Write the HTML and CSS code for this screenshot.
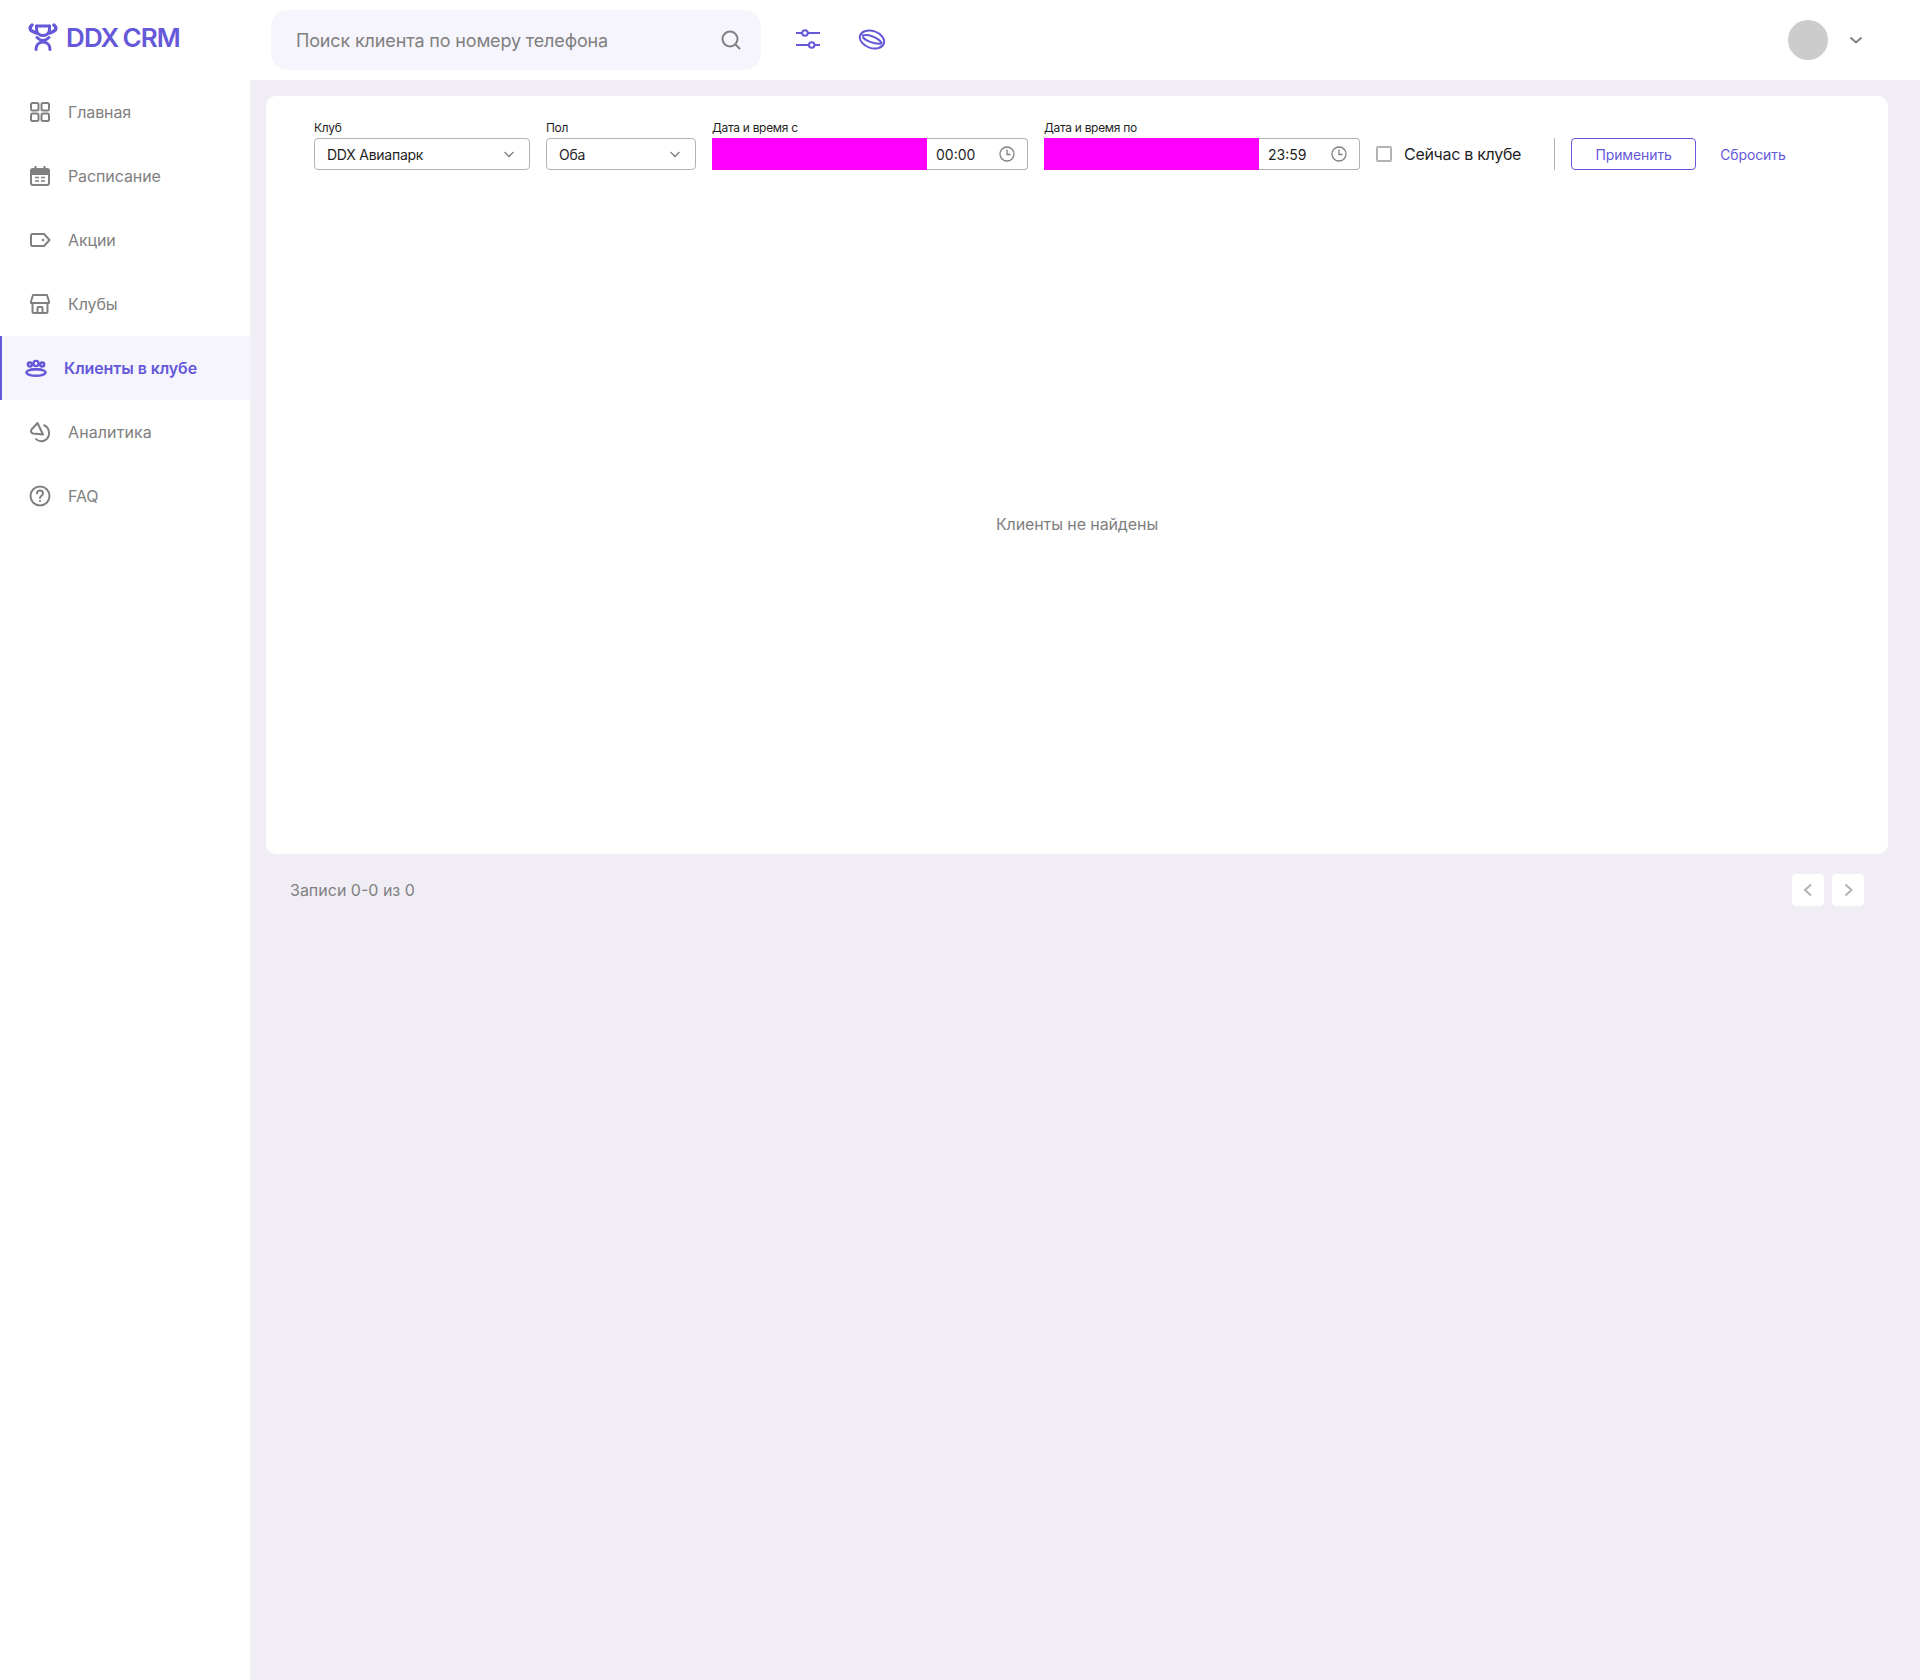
FILE: index.html
```html
<!DOCTYPE html>
<html lang="ru">

<head>
    <meta charset="UTF-8">
    <title>Клиенты в клубе</title>
    <link rel="stylesheet" href="styles.css">
</head>

<body>
    <aside class="sidebar">
        <div class="logo">
            <svg class="logo_icon" width="30" height="28" viewBox="0 0 30 28" fill="none" stroke="#6558d9" stroke-width="3" stroke-linecap="round">
                <path d="M8.500 3v3c0 4 2.500 6.500 6.500 6.500s6.500-2.500 6.500-6.500V3" />
                <path d="M8.500 3h13" />
                <path d="M4 2c-2.500 2-2.500 4.500 0 6l4 2" stroke-width="3.500" />
                <path d="M26 2c2.500 2 2.500 4.500 0 6l-4 2" stroke-width="3.500" />
                <path d="M9 14.500c2 2 4 3 6 3s4-1 6-3" />
                <path d="M8 26.500c0-4.500 3-7.500 7-7.500s7 3 7 7.500" />
            </svg>
            <span class="logo_text">DDX<span class="logo_gap">CRM</span></span>
        </div>
        <nav class="menu">
            <a class="menu_item">
                <svg width="24" height="24" viewBox="0 0 24 24" fill="none" stroke="currentColor" stroke-width="2">
                    <rect x="3" y="3" width="7.500" height="7.500" rx="1.500" />
                    <rect x="13.500" y="3" width="7.500" height="7.500" rx="1.500" />
                    <rect x="3" y="13.500" width="7.500" height="7.500" rx="1.500" />
                    <rect x="13.500" y="13.500" width="7.500" height="7.500" rx="1.500" />
                </svg>
                <span>Главная</span>
            </a>
            <a class="menu_item">
                <svg width="24" height="24" viewBox="0 0 24 24" fill="none" stroke="currentColor" stroke-width="2">
                    <rect x="3" y="5" width="18" height="16" rx="2" />
                    <path d="M3 7h18v3H3z" fill="currentColor" />
                    <path d="M7.500 2v4M16.500 2v4" />
                    <path d="M7 13.500h4M13 13.500h4M7 17h4M13 17h4" stroke-width="1.600" />
                </svg>
                <span>Расписание</span>
            </a>
            <a class="menu_item">
                <svg width="24" height="24" viewBox="0 0 24 24" fill="none" stroke="currentColor" stroke-width="2" stroke-linejoin="round">
                    <path d="M3 7.500a1.500 1.500 0 0 1 1.500-1.500H16l5.500 6-5.500 6H4.500A1.500 1.500 0 0 1 3 16.500z" />
                    <circle cx="15" cy="12" r="1.300" fill="currentColor" stroke="none" />
                </svg>
                <span>Акции</span>
            </a>
            <a class="menu_item">
                <svg width="24" height="24" viewBox="0 0 24 24" fill="none" stroke="currentColor" stroke-width="2" stroke-linejoin="round">
                    <path d="M5 3h14l2 6.500v1.500H3V9.500z" />
                    <path d="M4.500 11v8.500A1.500 1.500 0 0 0 6 21h12a1.500 1.500 0 0 0 1.500-1.500V11" />
                    <path d="M9.500 21v-5a1 1 0 0 1 1-1h3a1 1 0 0 1 1 1v5" />
                </svg>
                <span>Клубы</span>
            </a>
            <a class="menu_item active">
                <svg width="24" height="24" viewBox="0 0 24 24" fill="none" stroke="currentColor" stroke-width="2.400">
                    <circle cx="12" cy="7.500" r="2.600" />
                    <circle cx="5.800" cy="8.500" r="2" />
                    <circle cx="18.200" cy="8.500" r="2" />
                    <ellipse cx="12" cy="16.500" rx="9.500" ry="3.200" />
                    <path d="M6 14c2-1.200 10-1.200 12 0" />
                </svg>
                <span>Клиенты в клубе</span>
            </a>
            <a class="menu_item">
                <svg width="24" height="24" viewBox="0 0 24 24" fill="none" stroke="currentColor" stroke-width="2" stroke-linejoin="round">
                    <path d="M9.500 3 3.500 9.500C2.500 11 3 13 5 13.500l10 1z" />
                    <path d="M15.500 5a8.500 8.500 0 0 1 1 15.500c-3.500 1.500-7 .500-9-2" />
                </svg>
                <span class="analytics_text">Аналитика</span>
            </a>
            <a class="menu_item">
                <svg width="24" height="24" viewBox="0 0 24 24" fill="none" stroke="currentColor" stroke-width="2" stroke-linecap="round">
                    <circle cx="12" cy="12" r="9.500" />
                    <path d="M9 9.500c0-1.800 1.300-3 3-3s3 1.200 3 2.800c0 2.400-3 2.400-3 4.700" />
                    <circle cx="12" cy="17" r="1.100" fill="currentColor" stroke="none" />
                </svg>
                <span>FAQ</span>
            </a>
        </nav>
    </aside>

    <div class="main">
        <header class="topbar">
            <div class="search">
                <span class="search_text">Поиск клиента по номеру телефона</span>
                <svg width="24" height="24" viewBox="0 0 24 24" fill="none" stroke="#808080" stroke-width="2" stroke-linecap="round">
                    <circle cx="11" cy="11" r="7.500" />
                    <path d="M17 17l3.500 3.500" />
                </svg>
            </div>
            <div class="top_icons">
                <svg width="28" height="28" viewBox="0 0 28 28" fill="none" stroke="#6558d9" stroke-width="2">
                    <path d="M2 7h24M2 19h24" />
                    <circle cx="11" cy="7" r="2.800" fill="#fff" />
                    <circle cx="17.700" cy="19" r="2.800" fill="#fff" />
                </svg>
                <svg width="28" height="28" viewBox="0 0 28 28" fill="none" stroke="#6558d9" stroke-width="2">
                    <ellipse cx="14" cy="13.500" rx="12.500" ry="8.500" transform="rotate(18 14 13.500)" />
                    <path d="M4 9.500c6-1.500 16 1.500 20 8" />
                    <path d="M4.500 10.500c2 4 12 8 19 7" />
                </svg>
            </div>
            <div class="user">
                <div class="avatar"></div>
                <svg width="16" height="16" viewBox="0 0 16 16" fill="none" stroke="#808080" stroke-width="2">
                    <path d="M2.500 5.500 8 10.500l5.500-5" />
                </svg>
            </div>
        </header>

        <div class="content">
            <section class="card">
                <div class="filters">
                    <div class="field">
                        <label>Клуб</label>
                        <div class="select club_select">
                            <span>DDX Авиапарк</span>
                            <svg width="12" height="12" viewBox="0 0 12 12" fill="none" stroke="#808080" stroke-width="1.300"><path d="M1.500 4 6 8.500 10.500 4" /></svg>
                        </div>
                    </div>
                    <div class="field">
                        <label>Пол</label>
                        <div class="select sex_select">
                            <span>Оба</span>
                            <svg width="12" height="12" viewBox="0 0 12 12" fill="none" stroke="#808080" stroke-width="1.300"><path d="M1.500 4 6 8.500 10.500 4" /></svg>
                        </div>
                    </div>
                    <div class="field">
                        <label>Дата и время с</label>
                        <div class="datetime">
                            <div class="date_box"></div>
                            <div class="time_box">
                                <span>00:00</span>
                                <svg width="16" height="16" viewBox="0 0 16 16" fill="none" stroke="#808080" stroke-width="1.300"><circle cx="8" cy="8" r="7" /><path d="M8 3.500V8.500h3.500" /></svg>
                            </div>
                        </div>
                    </div>
                    <div class="field">
                        <label>Дата и время по</label>
                        <div class="datetime">
                            <div class="date_box"></div>
                            <div class="time_box">
                                <span>23:59</span>
                                <svg width="16" height="16" viewBox="0 0 16 16" fill="none" stroke="#808080" stroke-width="1.300"><circle cx="8" cy="8" r="7" /><path d="M8 3.500V8.500h3.500" /></svg>
                            </div>
                        </div>
                    </div>
                    <div class="now_in_club">
                        <span class="checkbox"></span>
                        <span>Сейчас в клубе</span>
                    </div>
                    <div class="divider"></div>
                    <button class="apply_btn">Применить</button>
                    <a class="reset_link">Сбросить</a>
                </div>
                <div class="empty">Клиенты не найдены</div>
            </section>
            <div class="pagination">
                <span class="records">Записи 0-0 из 0</span>
                <div class="pages">
                    <div class="page_btn">
                        <svg width="12" height="16" viewBox="0 0 12 16" fill="none" stroke="#b3b3b3" stroke-width="2"><path d="M9 2.500 3 8l6 5.500" /></svg>
                    </div>
                    <div class="page_btn">
                        <svg width="12" height="16" viewBox="0 0 12 16" fill="none" stroke="#b3b3b3" stroke-width="2"><path d="M3.500 2.500 9.500 8l-6 5.500" /></svg>
                    </div>
                </div>
            </div>
        </div>
    </div>
</body>

</html>
```

FILE: styles.css
```css
* {
    box-sizing: border-box;
}

body {
    display: flex;
    margin: 0;
    min-height: 100vh;
    background-color: #f0edf5;
    font-family: "Inter", "Noto Sans", sans-serif;
    color: #1f1f1f;
}

.sidebar {
    width: 250px;
    flex-shrink: 0;
    background-color: #fff;
}

.logo {
    display: flex;
    align-items: center;
    height: 80px;
    padding: 0 0 6px 28px;
    gap: 8px;
}

.logo_text {
    font-size: 26px;
    font-weight: 600;
    letter-spacing: -0.9px;
    color: #6558d9;
}

.logo_gap {
    margin-left: 4px;
}

.menu_item {
    display: flex;
    align-items: center;
    height: 64px;
    padding-left: 28px;
    gap: 16px;
    font-size: 16px;
    letter-spacing: -0.1px;
    color: #808080;
}

.analytics_text {
    letter-spacing: 0.1px;
}

.menu_item.active {
    padding-left: 22px;
    border-left: 2px solid #6558d9;
    background-color: #f6f5fd;
    color: #6558d9;
    font-weight: 600;
}

.main {
    display: flex;
    flex-direction: column;
    flex-grow: 1;
    min-width: 0;
}

.topbar {
    display: flex;
    align-items: center;
    height: 80px;
    flex-shrink: 0;
    padding: 0 56px 0 21px;
    background-color: #fff;
}

.search {
    display: flex;
    align-items: center;
    justify-content: space-between;
    width: 490px;
    height: 60px;
    padding: 0 18px 0 25px;
    border-radius: 16px;
    background-color: #f6f5fd;
}

.search_text {
    font-size: 18px;
    letter-spacing: -0.15px;
    color: #808080;
}

.top_icons {
    display: flex;
    margin-left: 33px;
    gap: 36px;
}

.user {
    display: flex;
    align-items: center;
    margin-left: auto;
    gap: 20px;
}

.avatar {
    width: 40px;
    height: 40px;
    border-radius: 50%;
    background-color: #cccccc;
}

.content {
    padding: 16px 32px 0 16px;
}

.card {
    display: flex;
    flex-direction: column;
    height: 758px;
    padding: 24px 48px 0 48px;
    border-radius: 10px;
    background-color: #fff;
}

.filters {
    display: flex;
    align-items: flex-end;
    gap: 16px;
    height: 74px;
    padding-bottom: 24px;
    flex-shrink: 0;
}

.field {
    display: flex;
    flex-direction: column;
}

.field label {
    height: 19px;
    padding-bottom: 1px;
    font-size: 12px;
    line-height: 18px;
    letter-spacing: -0.3px;
    color: #1f1f1f;
}

.select {
    display: flex;
    align-items: center;
    justify-content: space-between;
    height: 32px;
    padding: 0 14px 0 12px;
    border: 1px solid #b3b3b3;
    border-radius: 4px;
    font-size: 14px;
    letter-spacing: -0.25px;
}

.club_select {
    width: 216px;
}

.sex_select {
    width: 150px;
}

.datetime {
    display: flex;
    width: 316px;
    height: 32px;
}

.date_box {
    width: 215px;
    background-color: #ff00ff;
}

.time_box {
    display: flex;
    align-items: center;
    justify-content: space-between;
    flex-grow: 1;
    padding: 0 12px 0 9px;
    border: 1px solid #b3b3b3;
    border-left: none;
    border-radius: 0 4px 4px 0;
    font-size: 14px;
}

.now_in_club {
    display: flex;
    align-items: center;
    height: 32px;
    gap: 12px;
    font-size: 16px;
    letter-spacing: -0.3px;
}

.checkbox {
    width: 16px;
    height: 16px;
    border: 2px solid #b3b3b3;
    border-radius: 2px;
}

.divider {
    width: 1px;
    height: 32px;
    margin-left: 17px;
    background-color: #b3b3b3;
}

.apply_btn {
    width: 125px;
    height: 32px;
    border: 1px solid #6558d9;
    border-radius: 4px;
    background-color: #fff;
    font-family: inherit;
    font-size: 14px;
    letter-spacing: -0.1px;
    color: #6558d9;
}

.reset_link {
    display: flex;
    align-items: center;
    height: 32px;
    margin-left: 8px;
    font-size: 14px;
    letter-spacing: -0.1px;
    color: #6558d9;
}

.empty {
    display: flex;
    align-items: center;
    justify-content: center;
    flex-grow: 1;
    font-size: 16px;
    letter-spacing: -0.1px;
    color: #808080;
}

.pagination {
    display: flex;
    align-items: center;
    justify-content: space-between;
    padding: 20px 24px 0 24px;
}

.records {
    font-size: 16px;
    color: #808080;
}

.pages {
    display: flex;
    gap: 8px;
}

.page_btn {
    display: flex;
    align-items: center;
    justify-content: center;
    width: 32px;
    height: 32px;
    border-radius: 4px;
    background-color: #fff;
}
```
